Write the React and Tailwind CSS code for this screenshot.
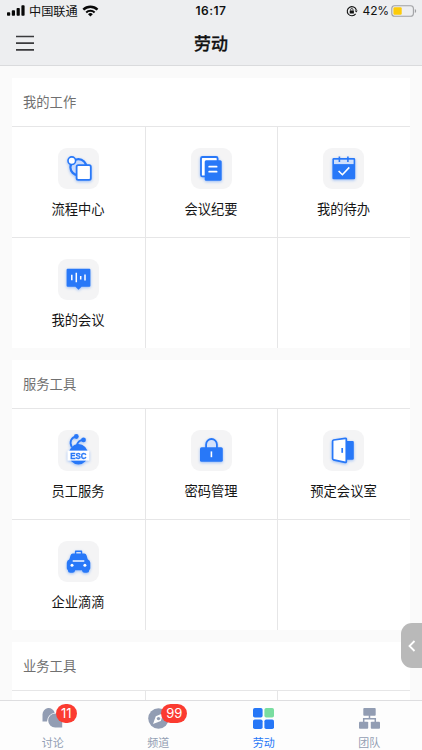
import React from "react";

const BLUE = "#2878f8";

const FlowIcon = () => (
  <>
    <circle cx="20.4" cy="19.2" r="8" fill="#c9dafb" stroke={BLUE} strokeWidth="2.2" />
    <circle cx="13.8" cy="12.7" r="3.8" fill="#fff" stroke={BLUE} strokeWidth="1.6" />
    <rect x="18.6" y="17.2" width="14.2" height="14.6" rx="1.6" fill="#fff" stroke={BLUE} strokeWidth="1.8" />
  </>
);

const MinutesIcon = () => (
  <>
    <rect x="10" y="9" width="16.6" height="19.4" rx="1.5" fill="#fff" stroke={BLUE} strokeWidth="1.8" />
    <rect x="13.7" y="12.2" width="17" height="20.6" rx="1.5" fill={BLUE} />
    <path d="M18.2 18.7h7.4M18.2 23.7h7.4" stroke="#fff" strokeWidth="1.8" strokeLinecap="round" />
  </>
);

const TodoIcon = () => (
  <>
    <rect x="9.4" y="10.1" width="22.8" height="21.1" rx="1.3" fill={BLUE} />
    <path d="M11 11.7h19.6v4.4H11z" fill="#cfdffb" />
    <path d="M16.4 8.4v5.6M24.9 8.4v5.6" stroke={BLUE} strokeWidth="1.6" />
    <path d="M15.6 23l3.8 3.7 6.9-7.3" fill="none" stroke="#fff" strokeWidth="1.6" />
  </>
);

const MeetingIcon = () => (
  <>
    <path d="M9.6 9.7h21.8a1 1 0 0 1 1 1v16a1 1 0 0 1-1 1h-7.9l-3 3.1-3-3.1H9.6a1 1 0 0 1-1-1v-16a1 1 0 0 1 1-1z" fill={BLUE} />
    <path d="M13.8 15.8v5.5M18.3 13.8v9.4M22.7 17v3.4M27 15.4v6.2" stroke="#fff" strokeWidth="1.5" />
  </>
);

const EscIcon = () => (
  <>
    <ellipse cx="20.4" cy="24.2" rx="9.6" ry="10.2" fill={BLUE} />
    <path d="M18.5 6.5c-5 .8-7.600 4.800-4.800 10.500M25.300 9.900c-4 .2-5.800 2.200-6.500 5.800" fill="none" stroke={BLUE} strokeWidth="1.8" />
    <circle cx="18.3" cy="6.5" r="2.4" fill={BLUE} />
    <circle cx="25.5" cy="9.9" r="2.4" fill={BLUE} />
    <path d="M9.5 20.6h21.8v10H9.5z" fill="#fff" />
    <text
      x="20.4"
      y="28.8"
      textAnchor="middle"
      fill={BLUE}
      fontSize="8.6"
      fontWeight="700"
      fontFamily="Liberation Sans, sans-serif"
      textLength="16.4"
      lengthAdjust="spacingAndGlyphs"
      stroke={BLUE}
      strokeWidth="0.3"
    >
      ESC
    </text>
  </>
);

const LockIcon = () => (
  <>
    <path d="M15.1 18v-3.6a5.4 5.4 0 0 1 10.8 0V18" fill="#d3e1fb" stroke={BLUE} strokeWidth="1.8" />
    <rect x="9" y="17.2" width="22.8" height="14.6" rx="1.6" fill={BLUE} />
    <path d="M20.4 21.4v5.8" stroke="#fff" strokeWidth="1.6" />
  </>
);

const DoorIcon = () => (
  <>
    <rect x="22" y="10.9" width="8.8" height="18.8" rx="1.2" fill={BLUE} />
    <path d="M10.6 10l11.6-1.7q1.1-.1 1.1 1v22.2q0 1.1-1.1.9l-11.6-2.6q-1-.2-1-1.2V11.2q0-1 1-1.2z" fill="#fff" stroke={BLUE} strokeWidth="1.7" />
    <path d="M19.2 18v4.8" stroke={BLUE} strokeWidth="1.7" />
  </>
);

const TaxiIcon = () => (
  <>
    <path d="M17.6 13.5v-3.2h5.9v3.2" fill="#d3e1fb" stroke={BLUE} strokeWidth="1.4" strokeLinejoin="round" />
    <path
      d="M14.9 12.6h11.3q1.9 0 2.4 1.9l1.1 3.8q2.6 1 2.6 3.5v5.4q0 1.3-1.1 1.8v.6q0 2.2-2.4 2.2h-2.2q-2.3 0-2.7-2.500h-6.700q-.4 2.500-2.700 2.500h-2.200Q9.900 31.800 9.900 29.600V29q-1.100-.5-1.100-1.800v-5.400q0-2.500 2.600-3.500l1.100-3.800q.5-1.900 2.400-1.900z"
      fill={BLUE}
    />
    <path d="M14.7 20h11.6" stroke="#fff" strokeWidth="1.4" />
    <circle cx="14" cy="24.2" r="1.5" fill="#fff" />
    <circle cx="26.9" cy="24.2" r="1.5" fill="#fff" />
  </>
);

const sections = [
  {
    title: "我的工作",
    items: [
      { label: "流程中心", Icon: FlowIcon },
      { label: "会议纪要", Icon: MinutesIcon },
      { label: "我的待办", Icon: TodoIcon },
      { label: "我的会议", Icon: MeetingIcon },
      null,
      null,
    ],
  },
  {
    title: "服务工具",
    items: [
      { label: "员工服务", Icon: EscIcon },
      { label: "密码管理", Icon: LockIcon },
      { label: "预定会议室", Icon: DoorIcon },
      { label: "企业滴滴", Icon: TaxiIcon },
      null,
      null,
    ],
  },
  { title: "业务工具", items: [null, null, null] },
];

const StatusBar = () => (
  <div className="grid h-[22px] grid-cols-3 items-center text-[12px]">
    <div className="flex items-center pl-[7px]">
      <svg width="18" height="11" viewBox="0 0 18 11" fill="#080808">
        <rect x="0" y="7.3" width="3.2" height="3.4" rx="0.8" />
        <rect x="4.8" y="5.3" width="3.2" height="5.4" rx="0.8" />
        <rect x="9.6" y="3" width="3.2" height="7.7" rx="0.8" />
        <rect x="14.4" y="0.3" width="3.2" height="10.4" rx="0.8" />
      </svg>
      <span className="ml-1 text-[12.2px]">中国联通</span>
      <svg className="ml-1" width="17" height="12" viewBox="0 0 17 12" fill="none" stroke="#080808">
        <path d="M1.3 4.6a10.3 10.3 0 0 1 14.2 0" strokeWidth="2.4" />
        <path d="M4.2 7.5a6.1 6.1 0 0 1 8.4 0" strokeWidth="2.1" />
        <path d="M8.4 11.6L6 9.2a3.5 3.5 0 0 1 4.8 0z" fill="#080808" stroke="none" />
      </svg>
    </div>
    <div className="text-center font-['Inter',sans-serif] text-[12px] font-semibold tracking-[0.5px]">16:17</div>
    <div className="flex items-center justify-end pr-[5px]">
      <svg width="12" height="12" viewBox="0 0 12 12" fill="none" stroke="#111">
        <path d="M9.6 8.9A4.6 4.6 0 1 1 10.3 5" strokeWidth="1.1" />
        <path d="M8.7 5.4h3l-1.5 2z" fill="#111" stroke="none" />
        <rect x="3.7" y="5.4" width="4.2" height="3.2" rx="0.4" fill="#111" stroke="none" />
        <path d="M4.6 5.5v-.8a1.2 1.2 0 0 1 2.4 0v.8" strokeWidth="0.8" />
      </svg>
      <span className="ml-[5px] font-['Inter',sans-serif] text-[12px] tracking-[-0.15px]">42%</span>
      <svg className="ml-[2px]" width="26" height="12" viewBox="0 0 26 12">
        <rect x="0.8" y="0.7" width="21.6" height="10.6" rx="2.8" fill="none" stroke="#a0a1a4" strokeWidth="1.1" />
        <rect x="2.4" y="2.3" width="8.3" height="7.4" rx="1.2" fill="#fccb0a" />
        <path d="M23.8 4v4q1.4-.7 1.4-2t-1.4-2z" fill="#a0a1a4" />
      </svg>
    </div>
  </div>
);

const AppCell = ({ item }) => (
  <div className="flex h-[110px] flex-col items-center bg-white pr-px">
    {item && (
      <>
        <div className="mt-[21px] size-[41px] shrink-0 rounded-[9px] bg-[#f4f4f5]">
          <svg className="drop-shadow-[0_1px_1.5px_rgba(40,120,248,0.45)]" width="41" height="41" viewBox="0 0 41 41">
            <item.Icon />
          </svg>
        </div>
        <span className="mt-[10px] text-[13.3px] leading-5 text-[#151515]">{item.label}</span>
      </>
    )}
  </div>
);

const Section = ({ title, items }) => (
  <section className="bg-white">
    <h2 className="h-12 pl-[11px] text-[13.3px] leading-[48px] text-[#707070]">{title}</h2>
    <div className="grid grid-cols-[133px_131px_132px] gap-px border-t border-[#e6e6e7] bg-[#e6e6e7]">
      {items.map((item, i) => (
        <AppCell key={i} item={item} />
      ))}
    </div>
  </section>
);

const ChatIcon = () => (
  <>
    <path d="M0.5 13.6V6.2a6.2 6.2 0 0 1 12.2-1.5A8.5 8.5 0 0 0 5.1 13.6z" fill="#929db3" />
    <path d="M13.2 5.5a7 7 0 0 1 7 7v7h-7a7 7 0 0 1 0-14z" fill="#929db3" />
  </>
);

const CompassIcon = () => (
  <>
    <circle cx="10.5" cy="10.5" r="10.3" fill="#929db3" />
    <path d="M15.6 5.1l-2.8 7.8-7.8 3.2 2.8-7.9z" fill="#fdfdfd" />
    <circle cx="10.5" cy="10.6" r="1.7" fill="#929db3" />
  </>
);

const WorkIcon = () => (
  <>
    <rect x="0" y="0" width="9.6" height="9.6" rx="1.8" fill="#2677f7" />
    <rect x="11.4" y="0" width="9.6" height="9.6" rx="1.8" fill="#79dda0" />
    <rect x="0" y="11.4" width="9.6" height="9.6" rx="1.8" fill="#2677f7" />
    <rect x="11.4" y="11.4" width="9.6" height="9.6" rx="1.8" fill="#2677f7" />
  </>
);

const TeamIcon = () => (
  <>
    <path d="M10.5 7v4M4.7 15v-4.2h11.6V15" fill="none" stroke="#929db3" strokeWidth="1.5" />
    <rect x="4.3" y="0" width="12.4" height="7.7" rx="0.9" fill="#929db3" />
    <rect x="0" y="13.7" width="9.2" height="7" rx="0.9" fill="#929db3" />
    <rect x="11.8" y="13.7" width="9.2" height="7" rx="0.9" fill="#929db3" />
  </>
);

const tabs = [
  { label: "讨论", Icon: ChatIcon, badge: "11" },
  { label: "频道", Icon: CompassIcon, badge: "99" },
  { label: "劳动", Icon: WorkIcon, active: true },
  { label: "团队", Icon: TeamIcon },
];

const TabBar = () => (
  <nav className="grid h-[50px] shrink-0 grid-cols-4 border-t border-[#dedee0] bg-[#fdfdfd]">
    {tabs.map(({ label, Icon, badge, active }) => (
      <div key={label} className="flex flex-col items-center pt-[7px]">
        <div className="relative">
          <svg width="21" height="21" viewBox="0 0 21 21">
            <Icon />
          </svg>
          {badge && (
            <span
              className={`absolute -top-[4px] left-[13.5px] flex h-[19px] items-center justify-center rounded-full bg-[#fb3b30] font-['Inter',sans-serif] text-[13px] text-white ${
                badge === "99" ? "w-[26px]" : "w-[21px]"
              }`}
            >
              {badge}
            </span>
          )}
        </div>
        <span className={`mt-[5px] text-[11px] leading-4 ${active ? "text-[#2677f7]" : "text-[#929db3]"}`}>
          {label}
        </span>
      </div>
    ))}
  </nav>
);

const App = () => (
  <div className="relative flex h-[750px] w-[422px] flex-col overflow-hidden bg-[#fafafa] font-['Noto_Sans_CJK_SC',sans-serif] text-[#111]">
    <header className="h-[66px] shrink-0 border-b border-[#dadbdd] bg-[#edeef0]">
      <StatusBar />
      <div className="grid h-[42px] grid-cols-[1fr_auto_1fr] items-center px-4">
        <svg width="18" height="16" viewBox="0 0 18 16" stroke="#3a3a3c" strokeWidth="1.7">
          <path d="M0 1.5h18M0 8.2h18M0 14.9h18" />
        </svg>
        <h1 className="text-[17px] leading-6 font-medium [-webkit-text-stroke:0.3px_#111]">劳动</h1>
      </div>
    </header>

    <main className="flex min-h-0 flex-1 flex-col gap-3 overflow-hidden px-3 pt-3">
      {sections.map((section) => (
        <Section key={section.title} {...section} />
      ))}
    </main>

    <TabBar />

    {/* Side drawer handle */}
    <div className="absolute top-[623px] right-0 flex h-[45px] w-[21px] items-center justify-center rounded-l-[11px] bg-[#b9b9b9]">
      <svg width="8" height="12" viewBox="0 0 8 12" fill="none" stroke="#fff" strokeWidth="1.8">
        <path d="M6.5 1L1.5 6l5 5" />
      </svg>
    </div>
  </div>
);

export default App;
